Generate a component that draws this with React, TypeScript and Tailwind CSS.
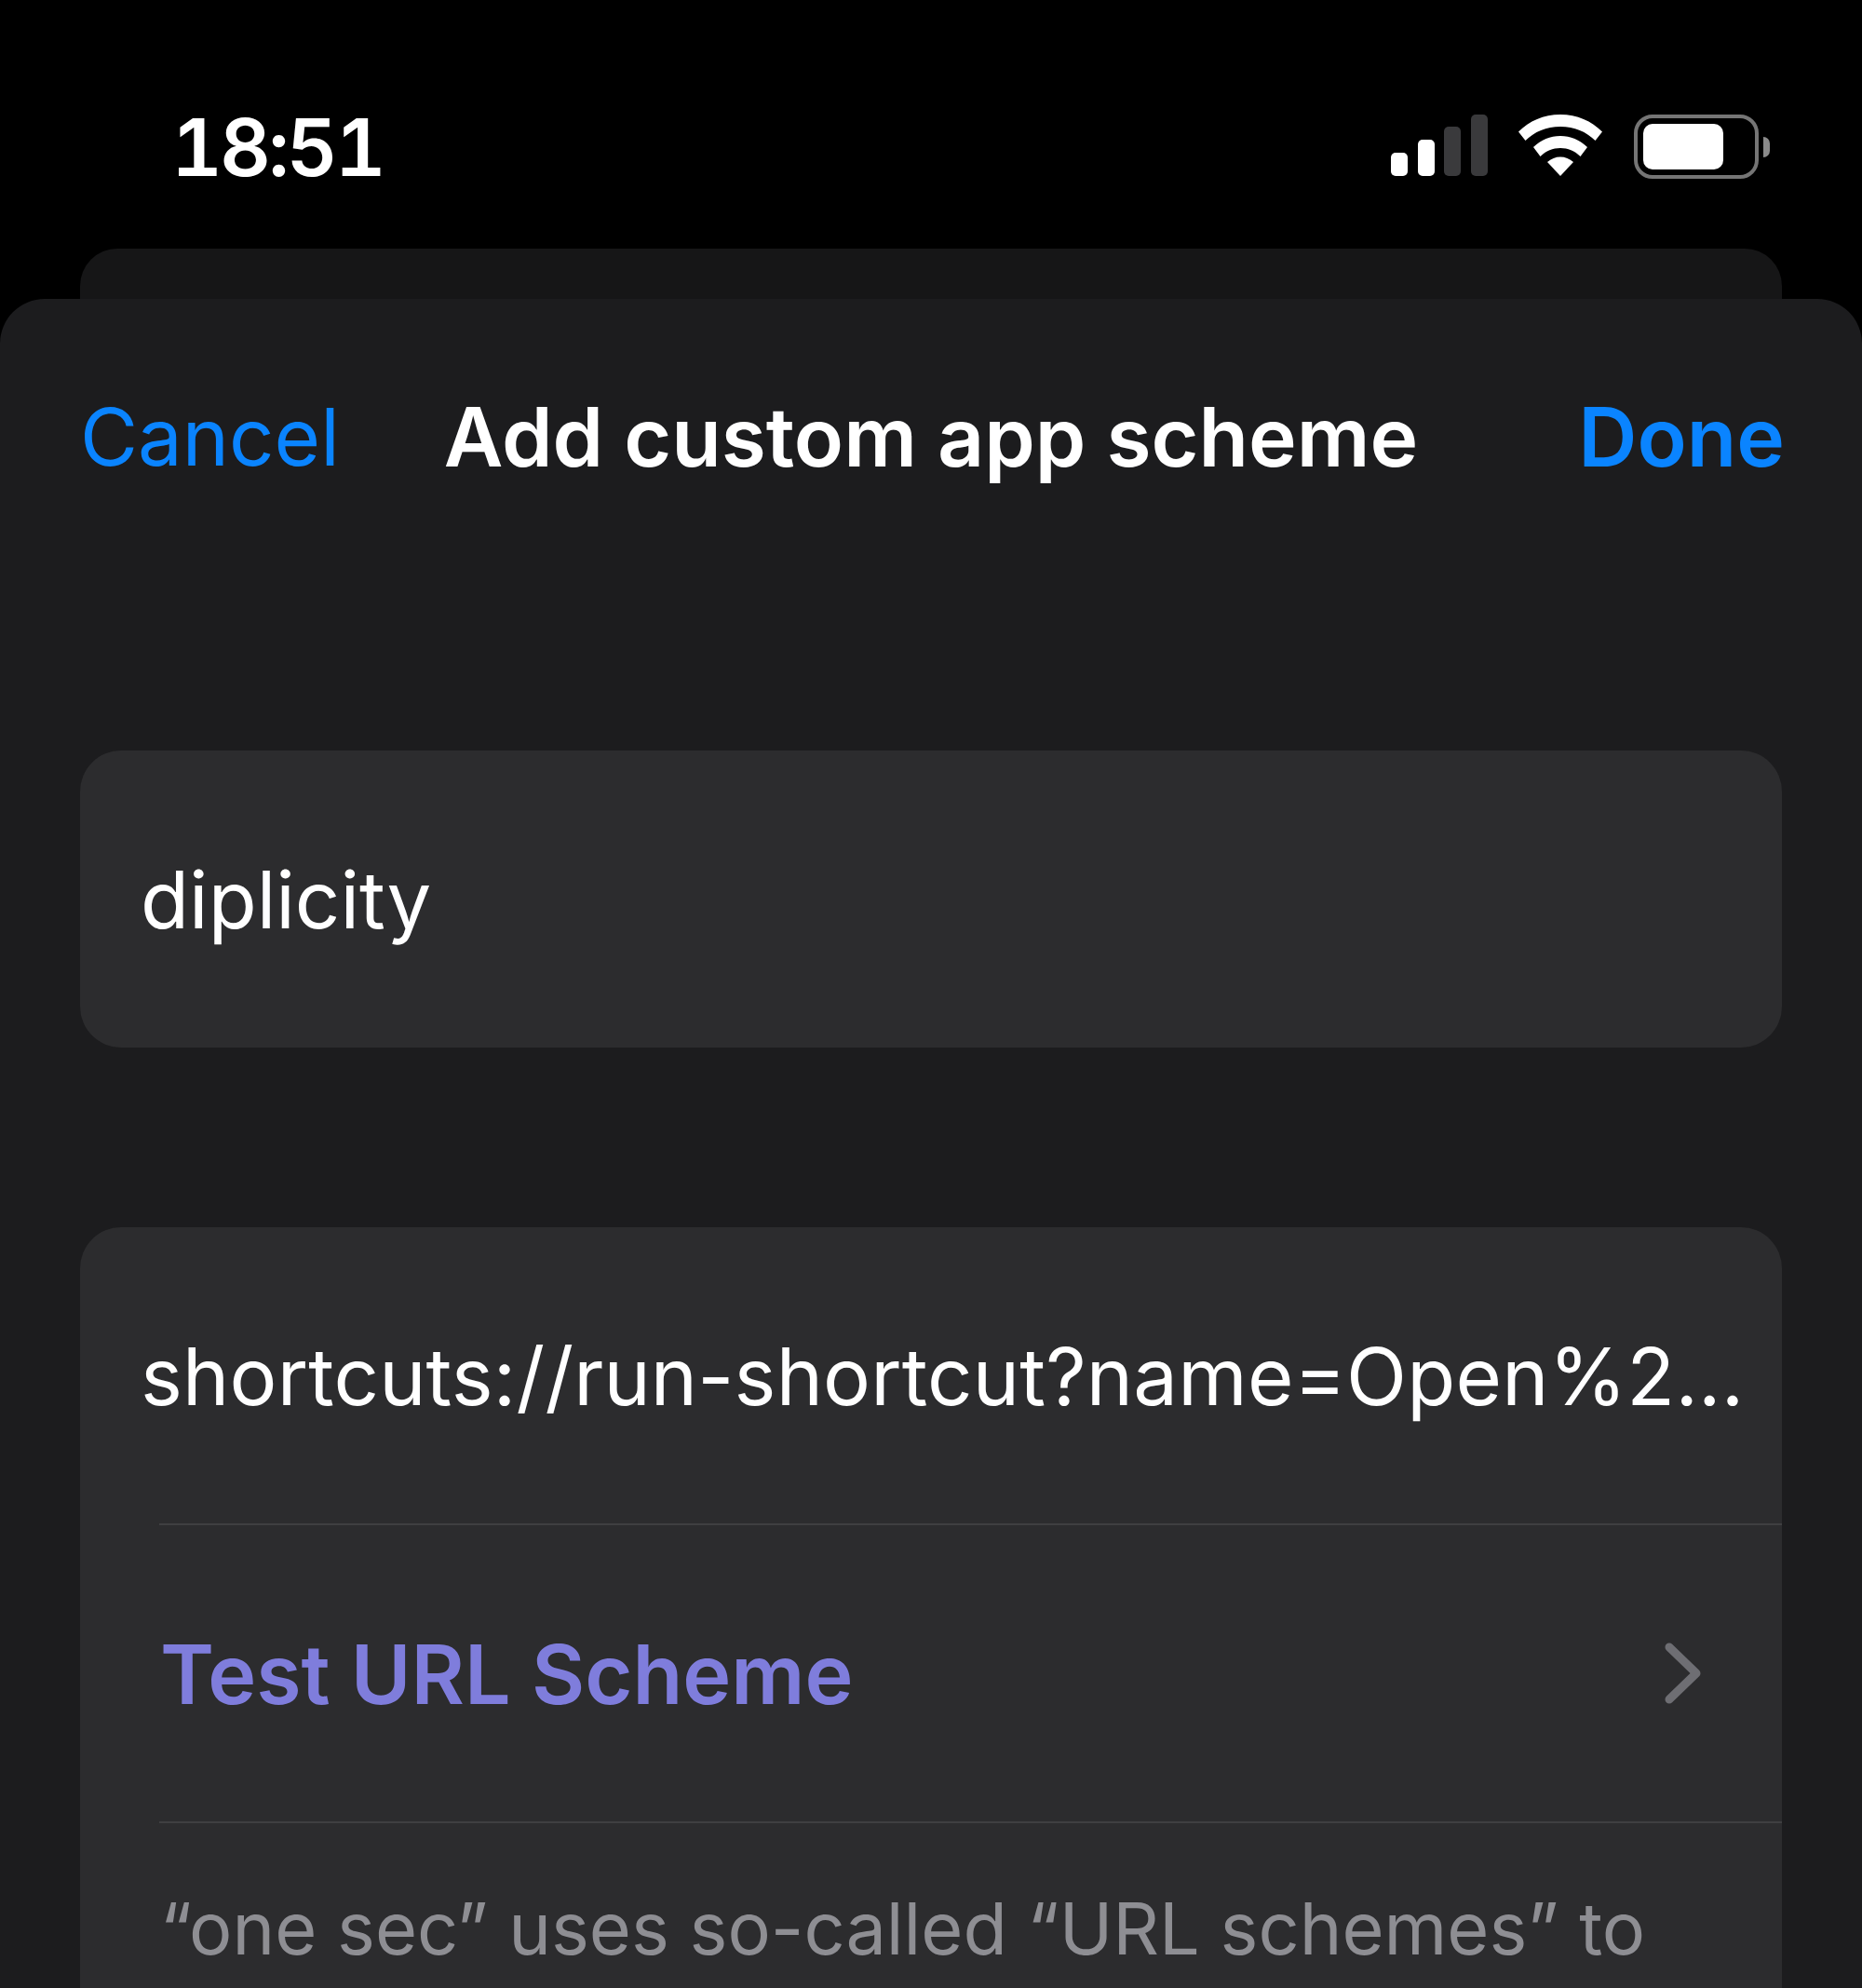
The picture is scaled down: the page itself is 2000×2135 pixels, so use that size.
const font = "font-['Inter','Liberation_Sans',sans-serif]"

function SignalIcon() {
  return (
    <svg width="104" height="68" viewBox="0 0 104 68" fill="none">
      <rect x="0" y="41" width="18" height="25" rx="5" fill="#fff" />
      <rect x="29" y="27" width="18" height="39" rx="5" fill="#fff" />
      <rect x="57" y="13" width="18" height="53" rx="5" fill="#3a3a3c" />
      <rect x="86" y="0" width="18" height="66" rx="5" fill="#3a3a3c" />
    </svg>
  )
}

function WifiIcon() {
  return (
    <svg width="90" height="66" viewBox="0 0 90 66" fill="#fff">
      <path d="M0 18.500C11.500 7 27 0 45 0s33.500 7 45 18.500l-7.500 9.500C73 18.500 60 13 45 13S17 18.500 7.500 28z" />
      <path d="M16 35C24.500 27 34 23 45 23s20.500 4 29 12l-7.500 10C60.500 39 53 36 45 36S29.500 39 23.500 45z" />
      <path d="M31 51c4-3.500 9-5.500 14-5.500s10 2 14 5.500L45 66z" />
    </svg>
  )
}

function BatteryIcon() {
  return (
    <div className="flex items-center gap-[5px]">
      <div className="w-[134px] h-[69px] rounded-[20px] border-[4px] border-[#757575] p-[6px]">
        <div className="w-[86px] h-full rounded-[10px] bg-white" />
      </div>
      <div className="w-[7px] h-[22px] rounded-r-full bg-[#8a8a8a]" />
    </div>
  )
}

export default function App() {
  return (
    <div className={`w-[2000px] h-[2135px] bg-black overflow-hidden flex flex-col text-white ${font}`}>
      {/* Status bar */}
      <div className="h-[267px] shrink-0 flex justify-between pl-[184px] pr-[99px] pt-[113px]">
        <span className="text-[85px] leading-[92px] font-semibold tabular-nums tracking-[-3px]">18:51</span>
        <div className="flex items-start gap-[34px] pt-[10px]">
          <div className="flex items-start gap-[33px]">
            <SignalIcon />
            <WifiIcon />
          </div>
          <BatteryIcon />
        </div>
      </div>

      {/* Card behind the sheet */}
      <div className="h-[54px] shrink-0 mx-[86px] rounded-t-[40px] bg-[#161617]" />

      {/* Sheet */}
      <div className="flex-1 flex flex-col bg-[#1c1c1e] rounded-t-[48px] px-[86px]">
        <div className="h-[297px] shrink-0 grid grid-cols-[1fr_auto_1fr] items-center">
          <span className="text-[85px] text-[#0a84ff]">Cancel</span>
          <span className="text-[87.500px] font-semibold">Add custom app scheme</span>
          <span className="text-[87.500px] font-semibold text-[#0a84ff] text-right -mr-[3px]">Done</span>
        </div>

        <div className="mt-[188px] h-[319px] shrink-0 rounded-[44px] bg-[#2c2c2e] flex items-center pl-[65px] pt-[2px]">
          <span className="text-[85px]">diplicity</span>
        </div>

        <div className="mt-[193px] flex-1 rounded-t-[44px] bg-[#2c2c2e]">
          <div className="h-[318px] flex items-center pl-[65px] pt-[4px]">
            <span className="text-[85px] tracking-[0.2px] whitespace-nowrap">shortcuts://run-shortcut?name=Open%2...</span>
          </div>
          <div className="ml-[85px] h-[2px] bg-[#3f3f41]" />
          <div className="h-[318px] flex items-center justify-between pl-[86px] pr-[86px]">
            <span className="text-[88px] font-semibold text-[#7f7ddc] pt-[2px]">Test URL Scheme</span>
            <svg width="40" height="66" viewBox="0 0 40 66" fill="none">
              <path d="M5 5l29 28L5 61" stroke="#6e6e73" strokeWidth="9" strokeLinecap="round" strokeLinejoin="round" />
            </svg>
          </div>
          <div className="ml-[85px] h-[2px] bg-[#3f3f41]" />
          <div className="pt-[67px] pl-[86px] pr-[40px]">
            <p className="text-[77.400px] leading-[92px] text-[#8e8e93] whitespace-nowrap">“one sec” uses so-called “URL schemes” to</p>
          </div>
        </div>
      </div>
    </div>
  )
}
